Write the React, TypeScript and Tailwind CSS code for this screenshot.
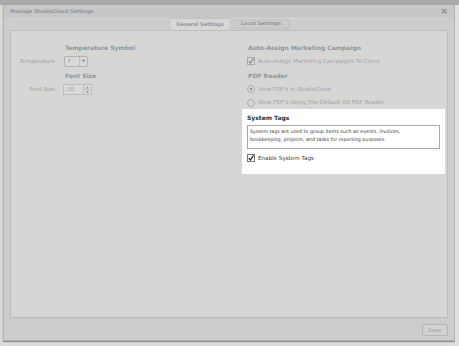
import React from 'react';

function CheckBox({ checked, dim }: { checked?: boolean; dim?: boolean }) {
  return (
    <svg width="8" height="8" viewBox="0 0 8 8" className="shrink-0">
      <rect x="0.5" y="0.5" width="7" height="7" fill={dim ? '#d8d8d8' : '#ffffff'} stroke={dim ? '#a9a9a9' : '#7a7a7a'} />
      {checked ? (
        <path d="M1.8 4.2 L3.3 6 L6.6 1.3" fill="none" stroke={dim ? '#8d8d8d' : '#222'} strokeWidth="1.2" />
      ) : null}
    </svg>
  );
}

function Radio({ checked }: { checked?: boolean }) {
  return (
    <svg width="8" height="8" viewBox="0 0 8 8" className="shrink-0">
      <circle cx="4" cy="4" r="3.5" fill="#d8d8d8" stroke="#ababab" />
      {checked ? <circle cx="4" cy="4" r="1.3" fill="#939393" /> : null}
    </svg>
  );
}

function Heading({ children }: { children: React.ReactNode }) {
  return (
    <div className="h-[14px] flex items-center text-[6px] font-bold text-[#8c96a0] pl-[1px]">{children}</div>
  );
}

function App() {
  return (
    <div className="w-[459px] h-[346px] overflow-hidden bg-[#dcdcdc] font-['DejaVu_Sans',sans-serif] flex flex-col">
      <div className="h-[5px] bg-[#a9a9a9] shrink-0"></div>

      <div className="flex flex-1">
        <div className="w-[3px] bg-[#d9d9d9]"></div>

        <div className="w-[452px] h-[336px] flex flex-col bg-[#cdcdcd] border-x border-b border-[#b3b3b3] shadow-[0_1px_1px_#8f8f8f]">
          {/* header */}
          <div className="h-[13px] flex items-center justify-between pl-[6px] pr-[6px] bg-[#c7c7c7]">
            <span className="text-[5px] font-bold text-[#8f959c]">Manage StudioCloud Settings</span>
            <span className="text-[9px] leading-none font-bold text-[#8a8a8a]">×</span>
          </div>

          {/* tabs */}
          <div className="h-[12px] flex items-end mx-[6px] border-t border-[#d8d8d8] pl-[159px] gap-[2px]">
            <div className="h-[12px] w-[62px] flex items-center justify-center bg-[#d6d6d4] border-x border-t border-[#c2c2c2] text-[5px] font-bold text-[#9298a0]">
              General Settings
            </div>
            <div className="h-[10px] w-[56px] mb-[1px] flex items-center justify-center bg-[#cbcbcb] border border-[#c0c0c0] text-[5px] font-bold text-[#9298a0]">
              Local Settings
            </div>
          </div>

          {/* panel */}
          <div className="mx-[6px] h-[288px] bg-[#d6d6d4] border border-[#bdbdbd] shadow-[0_1px_0_#c4c4c4] grid grid-cols-[231px_1fr] pt-[9px]">
            <div className="flex flex-col">
              <div className="pl-[53px]">
                <Heading>Temperature Symbol</Heading>
              </div>
              <div className="h-[14px] flex items-center">
                <span className="w-[44px] text-right text-[5.6px] text-[#9d9d9d]">Temperature</span>
                <div className="ml-[9px] w-[24px] h-[11px] flex items-center border border-[#b3b3b3] rounded-[2px] bg-[#d9d9d9]">
                  <span className="w-[14px] pl-[3px] text-[5.6px] text-[#a0a0a0]">F</span>
                  <span className="h-full border-l border-[#c0c0c0] flex-1 flex items-center justify-center text-[4px] text-[#8d8d8d]">▼</span>
                </div>
              </div>
              <div className="pl-[53px]">
                <Heading>Font Size</Heading>
              </div>
              <div className="h-[14px] flex items-center">
                <span className="w-[44px] text-right text-[5.6px] text-[#9d9d9d]">Font Size</span>
                <div className="ml-[8px] w-[29px] h-[11px] flex items-center border border-[#bdbdbd] bg-[#d9d9d9]">
                  <span className="flex-1 pl-[3px] text-[5.6px] text-[#a3a3a3]">10</span>
                  <div className="w-[8px] h-full border-l border-[#bcbcbc] flex flex-col">
                    <span className="flex-1 flex items-center justify-center text-[3px] text-[#8d8d8d] border-b border-[#c4c4c4]">▲</span>
                    <span className="flex-1 flex items-center justify-center text-[3px] text-[#8d8d8d]">▼</span>
                  </div>
                </div>
              </div>
            </div>

            <div className="flex flex-col">
              <div className="pl-[5px]">
                <Heading>Auto-Assign Marketing Campaign</Heading>
                <div className="h-[14px] flex items-center gap-[3px]">
                  <CheckBox checked dim />
                  <span className="text-[5.6px] text-[#a2a2a2]">Auto-Assign Marketing Campaigns To Client</span>
                </div>
                <Heading>PDF Reader</Heading>
                <div className="h-[14px] flex items-center gap-[3px]">
                  <Radio checked />
                  <span className="text-[5.6px] text-[#a2a2a2]">View PDF's In StudioCloud</span>
                </div>
                <div className="h-[13px] flex items-center gap-[3px]">
                  <Radio />
                  <span className="text-[5.6px] text-[#a2a2a2]">View PDF's Using The Default OS PDF Reader</span>
                </div>
              </div>

              <div className="w-[203px] h-[65px] bg-white px-[5px] pt-[2px] flex flex-col">
                <div className="h-[12px] flex items-center text-[6px] font-bold text-[#26323d]">System Tags</div>
                <div className="mt-[2px] h-[24px] border border-[#a8a8a8] px-[2px] pt-[2px] text-[4.8px] leading-[8px] text-[#3a3a3a]">
                  System tags are used to group items such as events, invoices,
                  <br />
                  bookkeeping, projects, and tasks for reporting purposes.
                </div>
                <div className="h-[14px] mt-[2px] flex items-center gap-[3px]">
                  <CheckBox checked />
                  <span className="text-[5.6px] text-[#3a3a3a]">Enable System Tags</span>
                </div>
              </div>
            </div>
          </div>

          {/* footer */}
          <div className="flex-1 flex items-start justify-end pr-[6px] pt-[6px]">
            <div className="w-[26px] h-[12px] flex items-center justify-center bg-[#d3d3d3] border border-[#b4b4b4] rounded-[2px] text-[5.5px] text-[#9e9e9e]">
              Save
            </div>
          </div>
        </div>

        <div className="flex-1 bg-[#e0e0e0]"></div>
      </div>
    </div>
  );
}

export default App;
